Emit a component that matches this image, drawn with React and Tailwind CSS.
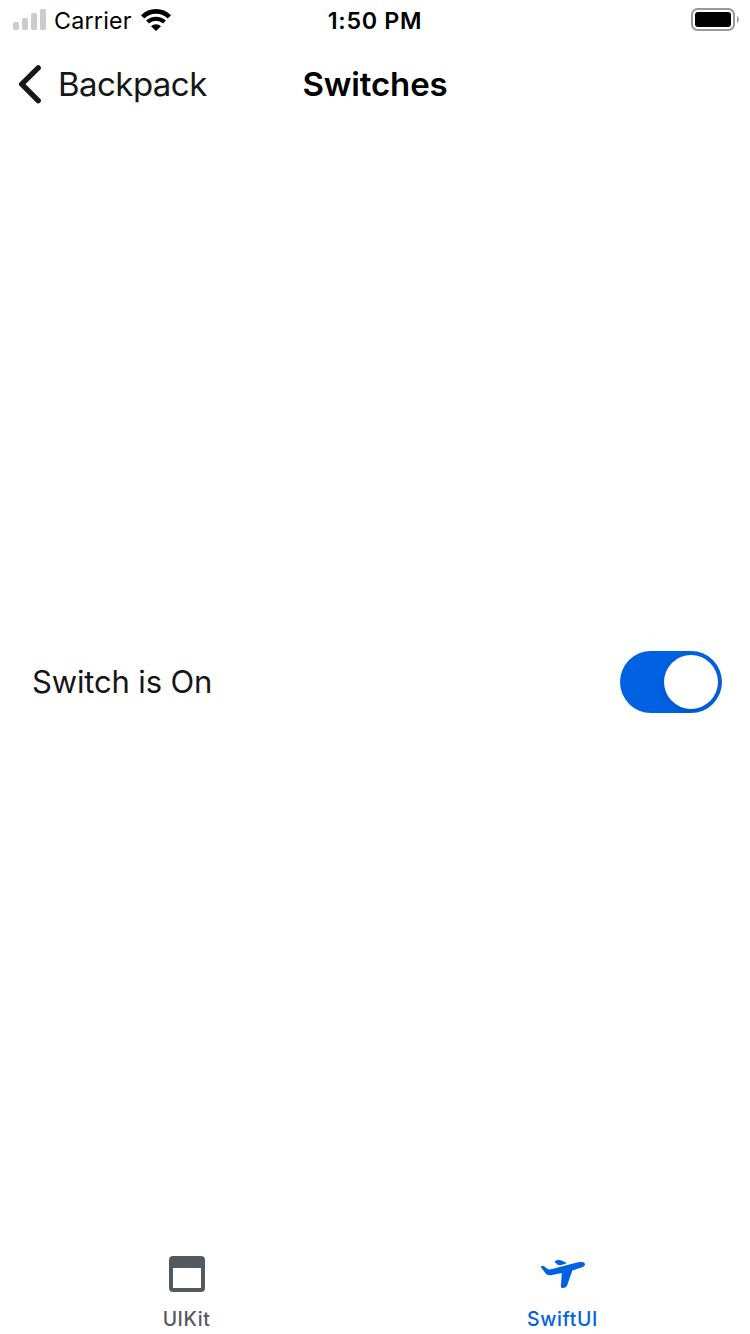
import React, { useState } from "react";

function SignalIcon() {
  return (
    <svg width="34" height="22" viewBox="0 0 34 22" fill="#cccccc">
      <rect x="0" y="13" width="6" height="8" rx="1.8" />
      <rect x="9" y="9" width="6" height="12" rx="1.8" />
      <rect x="18" y="4" width="6" height="17" rx="1.8" />
      <rect x="27" y="0" width="6" height="21" rx="1.8" />
    </svg>
  );
}

function WifiIcon() {
  return (
    <svg width="30" height="22" viewBox="0 0 30 22" fill="none" stroke="#000">
      <path d="M1.6 7.9C9 .5 21 .5 28.4 7.9" strokeWidth="4.6" />
      <path d="M6.5 13.1C11.2 8.6 18.8 8.6 23.5 13.1" strokeWidth="4.2" />
      <path d="M10 17.3C12.8 14.6 17.2 14.6 20 17.3L15 22Z" fill="#000" stroke="none" />
    </svg>
  );
}

function BatteryIcon() {
  return (
    <svg width="48" height="24" viewBox="0 0 48 24">
      <rect x="1" y="1" width="42" height="21" rx="5.5" fill="none" stroke="#999" strokeWidth="2" />
      <rect x="4" y="4" width="36" height="15" rx="3" fill="#000" />
      <path d="M46 8C48.4 9.3 48.4 13.7 46 15Z" fill="#999" />
    </svg>
  );
}

function BackIcon() {
  return (
    <svg width="24" height="40" viewBox="0 0 24 40" fill="none" stroke="#161616" strokeWidth="5.4" strokeLinecap="round" strokeLinejoin="round">
      <path d="M20.2 3.8L3.7 20.2L20.2 36.6" />
    </svg>
  );
}

function WindowIcon() {
  return (
    <svg width="36" height="36" viewBox="0 0 36 36">
      <path fillRule="evenodd" fill="#545860" d="M4 0H32A4 4 0 0 1 36 4V32A4 4 0 0 1 32 36H4A4 4 0 0 1 0 32V4A4 4 0 0 1 4 0ZM4 12V32H32V12Z" />
    </svg>
  );
}

function PlaneIcon() {
  return (
    <svg width="46" height="30" viewBox="0 0 46 30" fill="#0062e3">
      <path d="M1.3 8.7C.4 7.3 1.6 6.7 3 7C5 7.2 6.4 9.6 8.4 10.3C9.5 10.8 10.7 10.5 12 10.1L37 3.6C40 2.8 43.6 2.9 44.7 4.5C45.5 6 44.4 7.4 42 8.3L32.3 11.4L27.3 26C26.6 28 25.3 28.9 22.5 29C21.2 29.1 20.8 28.3 20.9 27L21.8 14L12 16.1C9.5 16.6 7.4 16.2 5.7 14.4Z" />
      <path d="M15 3.3C14.3 2.4 15.5 1.5 17.3 1.1C19.2.8 20.2.9 21.5 1.5L25.5 3.2C26.5 3.7 26.4 4.5 25.4 4.8L20.5 6.2C19.2 6.5 18.3 6.2 17.4 5.5Z" />
    </svg>
  );
}

function Toggle({ on, onChange }) {
  return (
    <button
      type="button"
      role="switch"
      aria-checked={on}
      aria-label="Switch"
      onClick={() => onChange(!on)}
      className={`flex h-[62px] w-[102px] items-center overflow-hidden rounded-full p-1 ${on ? "justify-end bg-[#0062e3]" : "justify-start bg-[#e0e3e5]"}`}
    >
      <span className="size-[54px] rounded-full bg-white shadow-[0_4px_14px_rgba(0,0,0,0.12)]" />
    </button>
  );
}

export default function App() {
  const [on, setOn] = useState(true);
  return (
    <div className="flex h-[1334px] w-[750px] flex-col overflow-hidden bg-white font-['Inter',sans-serif] text-[#161616]">
      <header>
        <div className="grid h-10 grid-cols-3 items-center text-[23.3px] text-black">
          <div className="flex items-center pl-[13px]">
            <SignalIcon />
            <span className="ml-[7px] w-[78px] pt-0.5 tracking-[0.2px]">Carrier</span>
            <span className="ml-[9px]"><WifiIcon /></span>
          </div>
          <span className="pt-0.5 text-center font-semibold tracking-[0.7px]">1:50 PM</span>
          <div className="flex justify-end pr-[11px]"><BatteryIcon /></div>
        </div>
        <nav className="grid h-22 grid-cols-3 items-center text-[33px]">
          <button type="button" className="flex items-center pl-[18px]">
            <BackIcon />
            <span className="ml-4 pt-0.5 tracking-[-0.55px]">Backpack</span>
          </button>
          <h1 className="pt-0.5 text-center font-semibold tracking-[-0.15px] text-black">Switches</h1>
        </nav>
      </header>
      <main className="flex flex-1 items-center justify-between pr-7 pl-8">
        <span className="text-[31px] tracking-[-0.15px]">Switch is On</span>
        <Toggle on={on} onChange={setOn} />
      </main>
      <footer className="grid h-[98px] grid-cols-2 text-[19.4px] leading-7 font-medium">
        <div className="flex flex-col items-center pt-5 pr-0.5 text-[#545860]">
          <WindowIcon />
          <span className="mt-[13px] tracking-[0.6px]">UIKit</span>
        </div>
        <div className="flex flex-col items-center pt-[23px] text-[#0062e3]">
          <PlaneIcon />
          <span className="mt-4 tracking-[0.65px]">SwiftUI</span>
        </div>
      </footer>
    </div>
  );
}
